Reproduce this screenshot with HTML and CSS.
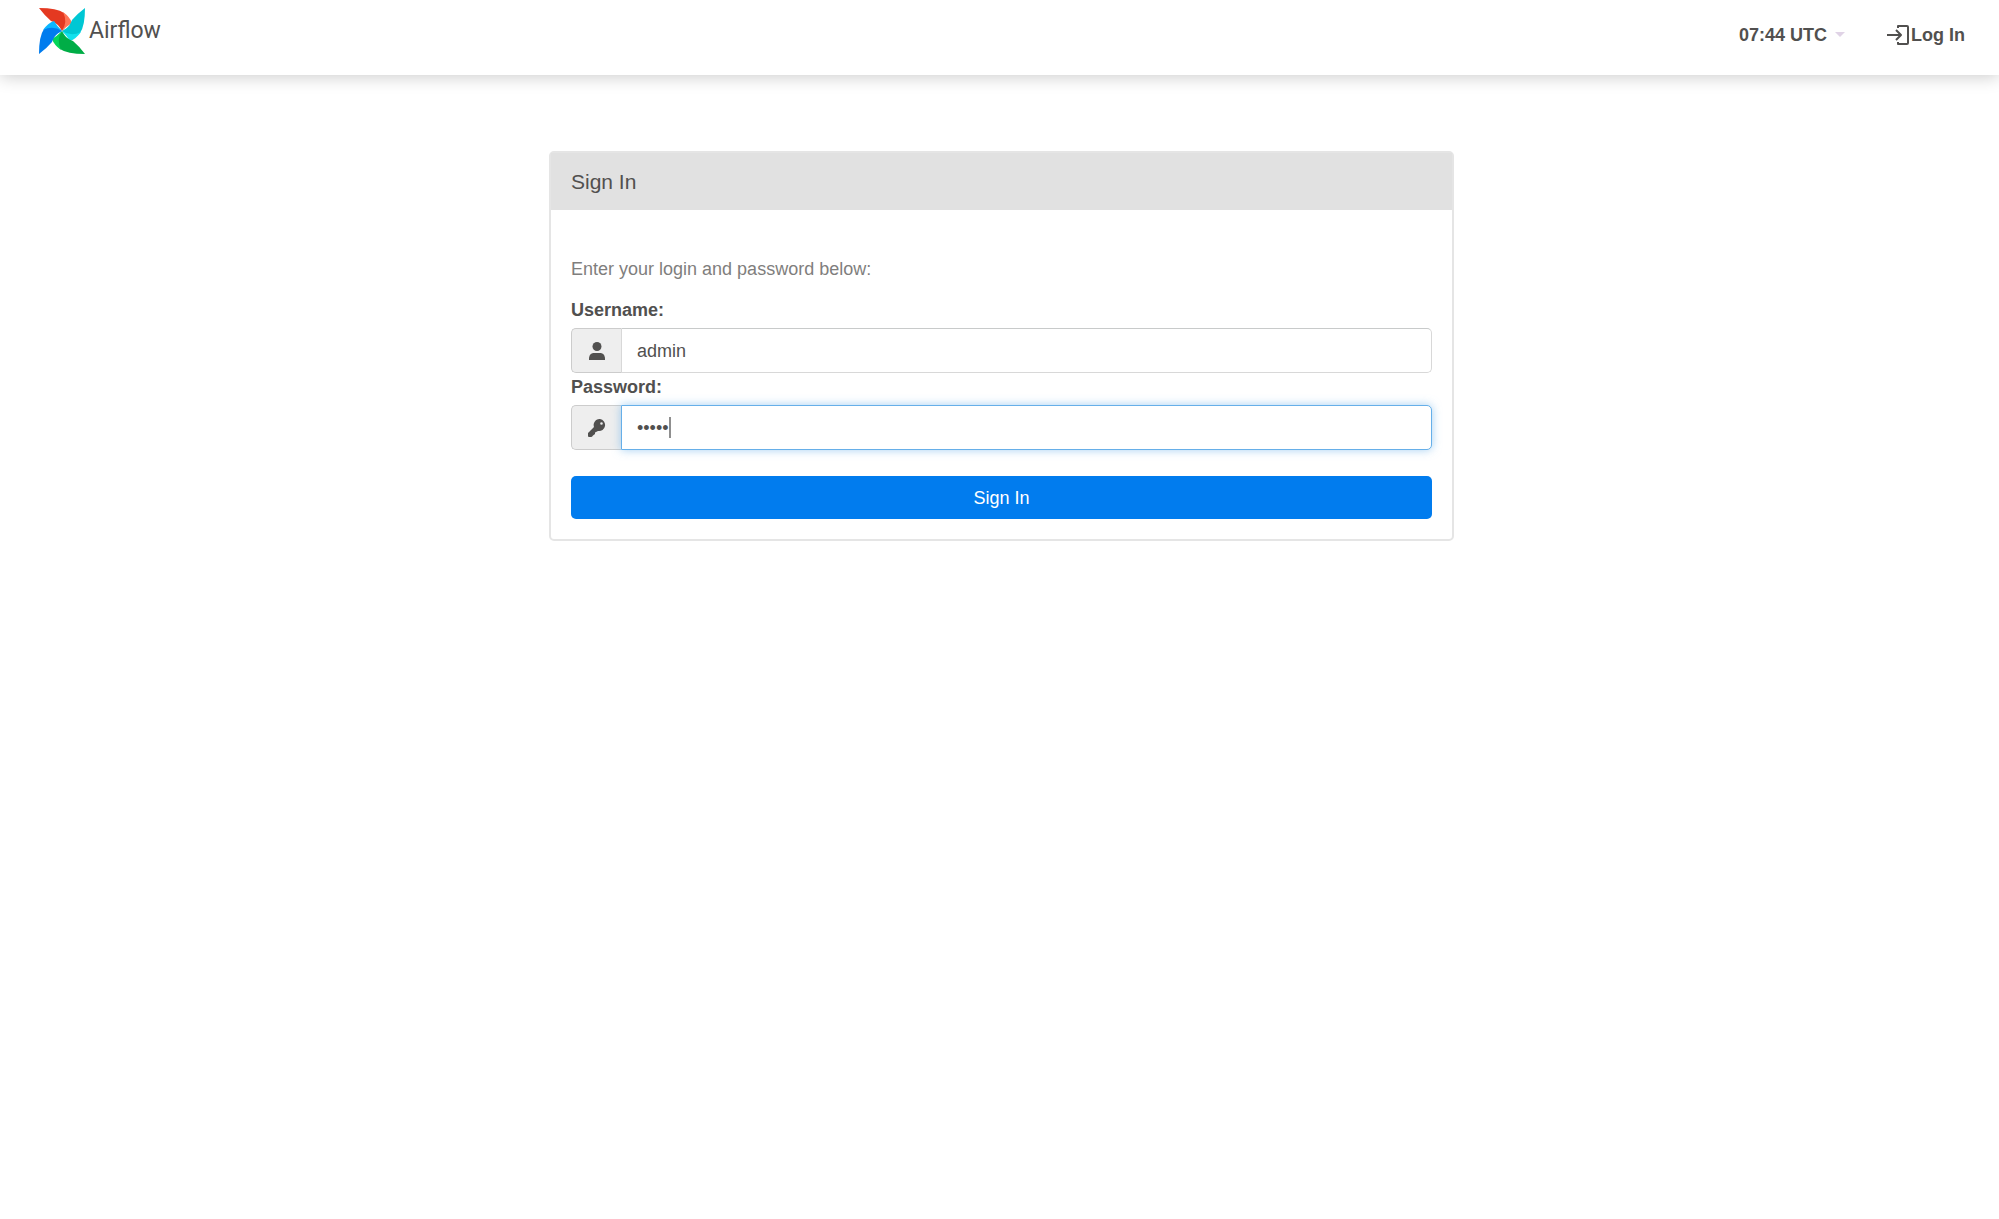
FILE: index.html
```html
<!DOCTYPE html>
<html lang="en">
<head>
    <meta charset="UTF-8">
    <meta name="viewport" content="width=device-width, initial-scale=1.0">
    <title>Sign In - Airflow</title>
    <link rel="stylesheet" href="styles.css">
</head>
<body>
    <nav class="navbar">
        <a href="/" class="brand">
            <svg class="brand-logo" viewBox="0 0 46 46" aria-hidden="true">
                <defs>
                    <path id="blade" d="M0 0Q18 0 25 5Q31 15 23 23C20 17 17 15 12 13Q6 8 0 0Z"/>
                    <path id="fold" d="M23 23Q29 14 24 4Q31 9 33 15Q28 18 23 23Z"/>
                </defs>
                <use href="#blade" fill="#e43921"/>
                <use href="#fold" fill="#ff7557"/>
                <use href="#blade" fill="#00c7d4" transform="rotate(90 23 23)"/>
                <use href="#fold" fill="#11e1ee" transform="rotate(90 23 23)"/>
                <use href="#blade" fill="#00ad46" transform="rotate(180 23 23)"/>
                <use href="#fold" fill="#04d659" transform="rotate(180 23 23)"/>
                <use href="#blade" fill="#017cee" transform="rotate(270 23 23)"/>
                <use href="#fold" fill="#0cb6ff" transform="rotate(270 23 23)"/>
            </svg>
            <span>Airflow</span>
        </a>
        <div class="nav-right">
            <button type="button" class="nav-item">07:44 UTC <span class="caret"></span></button>
            <a href="/login/" class="nav-item">
                <svg class="login-icon" viewBox="0 0 24 22" aria-hidden="true">
                    <path d="M0 11h14M9 6l5 5-5 5M11 4V2h9q1 0 1 1v16q0 1-1 1h-9v-2"/>
                </svg>
                Log In
            </a>
        </div>
    </nav>

    <main class="container">
        <div class="panel">
            <div class="panel-heading">Sign In</div>
            <form class="panel-body" method="post" action="/login/">
                <p class="help-block">Enter your login and password below:</p>

                <label for="username">Username:</label>
                <div class="input-group">
                    <span class="addon">
                        <svg viewBox="0 0 18 18" aria-hidden="true">
                            <circle cx="9" cy="4.500" r="4.500"/>
                            <path d="M1 18v-1c0-4 2-6 5-6h6c3 0 5 2 5 6v1z"/>
                        </svg>
                    </span>
                    <input type="text" id="username" name="username" value="admin">
                </div>

                <label for="password">Password:</label>
                <div class="input-group">
                    <span class="addon">
                        <svg viewBox="0 0 18 18" aria-hidden="true">
                            <path fill-rule="evenodd" d="M12 0a6 6 0 0 0-6 8L0 14V17q0 1 1 1h2q1 0 2-1.500l2-1.500V13.500L10 12A6 6 0 1 0 12 0zM13.500 3.200a1.300 1.300 0 1 1 0 2.600a1.300 1.300 0 0 1 0-2.600z"/>
                        </svg>
                    </span>
                    <input type="password" id="password" name="password" value="admin" autofocus>
                    <span class="text-cursor"></span>
                </div>

                <button type="submit" class="btn-primary">Sign In</button>
            </form>
        </div>
    </main>
</body>
</html>
```

FILE: styles.css
```css
* {
    box-sizing: border-box;
}

body {
    margin: 0;
    background: #fff;
    color: #51504f;
    font-family: "Liberation Sans", Arial, sans-serif;
    font-size: 18px;
    line-height: 26px;
}

.navbar {
    display: flex;
    justify-content: space-between;
    height: 75px;
    padding: 0 34px 0 39px;
    background: #fff;
    box-shadow: 0 2px 16px rgba(0, 0, 0, 0.2);
}

.brand {
    display: flex;
    align-items: center;
    gap: 4px;
    padding-bottom: 13px;
    color: #51504f;
    font-family: Roboto, sans-serif;
    font-size: 23px;
    line-height: 28px;
    text-decoration: none;
}

.brand-logo {
    width: 46px;
    height: 46px;
}

.nav-right {
    display: flex;
    align-items: center;
    gap: 42px;
    padding-bottom: 6px;
}

.nav-item {
    display: flex;
    align-items: center;
    padding: 0;
    border: none;
    background: none;
    color: #51504f;
    font: inherit;
    font-weight: bold;
    text-decoration: none;
    cursor: pointer;
}

.caret {
    margin-left: 8px;
    border-top: 5px solid #e0d3e6;
    border-left: 5px solid transparent;
    border-right: 5px solid transparent;
}

.login-icon {
    width: 24px;
    height: 22px;
    fill: none;
    stroke: #51504f;
    stroke-width: 2;
    stroke-linejoin: round;
}

.container {
    padding: 76px 16px 0 20px;
}

.panel {
    max-width: 905px;
    margin: 0 auto;
    border: 2px solid #e5e5e5;
    border-radius: 5px;
}

.panel-heading {
    padding: 16px 20px 15px;
    background: #e1e1e1;
    font-size: 21px;
}

.panel-body {
    padding: 46px 20px 20px;
}

.help-block {
    margin: 0 0 14px;
    color: #7f7e7d;
}

label {
    display: block;
    padding: 1px 0 5px;
    font-weight: bold;
}

.input-group {
    display: flex;
    position: relative;
    height: 45px;
}

.addon {
    display: flex;
    align-items: center;
    justify-content: center;
    width: 50px;
    border: 1px solid #ccc;
    border-right: none;
    border-radius: 5px 0 0 5px;
    background: #eee;
}

.addon svg {
    width: 18px;
    height: 18px;
    fill: #51504f;
}

.input-group input {
    flex: 1;
    min-width: 0;
    padding: 0 15px;
    border: 1px solid #d8d8d8;
    border-top-color: #c8caca;
    border-radius: 0 5px 5px 0;
    background: #fff;
    color: #51504f;
    font: inherit;
    outline: none;
}

.input-group input:focus {
    border-color: #66afe9;
    box-shadow: 0 0 10px rgba(102, 175, 233, 0.6);
    caret-color: transparent;
}

/* sits over the field, right after the last dot */
.text-cursor {
    position: absolute;
    top: 12px;
    left: 98px;
    width: 2px;
    height: 21px;
    background: #8f8f8f;
}

.btn-primary {
    display: block;
    width: 100%;
    height: 43px;
    margin-top: 26px;
    border: none;
    border-radius: 5px;
    background: #017cee;
    color: #fff;
    font: inherit;
    cursor: pointer;
}
```
